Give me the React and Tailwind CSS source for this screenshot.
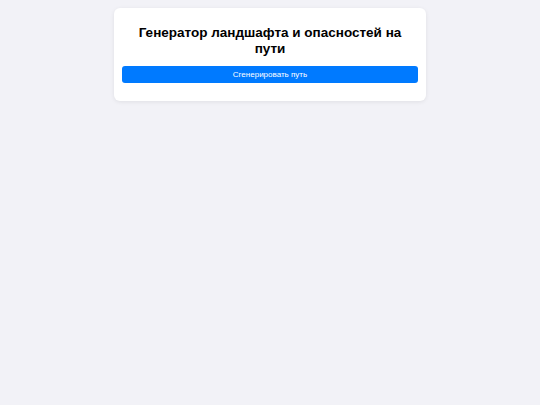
export default function App() {
  return (
    <div className="min-h-screen bg-[#f2f2f7] pt-2" style={{ fontFamily: '"Liberation Sans", Arial, sans-serif' }}>
      <div className="mx-auto w-[312px] rounded-md bg-white px-2 pt-[17px] pb-[18px] shadow-[0_1px_4px_rgba(0,0,0,0.08)]">
        <h1 className="mb-[9px] px-3 text-center text-[13.5px] font-bold leading-[16px] text-black">
          Генератор ландшафта и опасностей на пути
        </h1>
        <button className="flex h-[17px] w-full items-center justify-center rounded-[3px] bg-[#007aff] text-[8px] text-white">
          Сгенерировать путь
        </button>
      </div>
    </div>
  );
}
